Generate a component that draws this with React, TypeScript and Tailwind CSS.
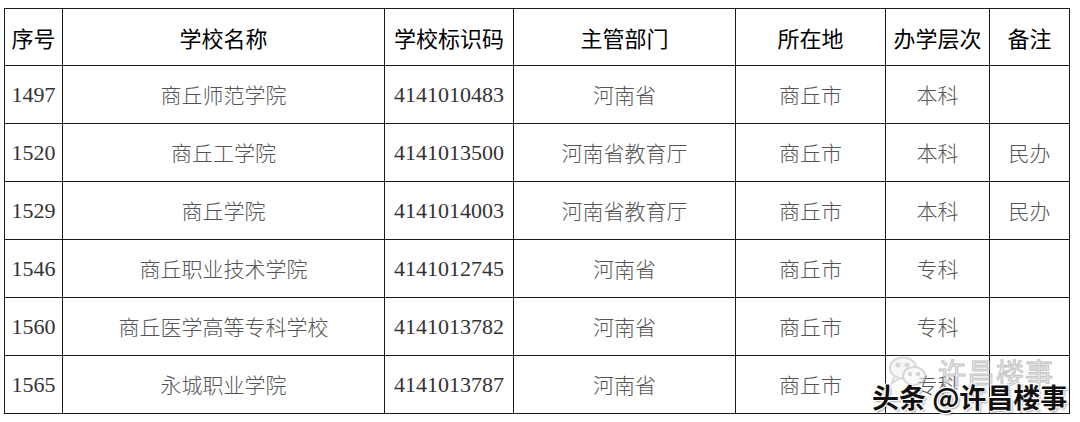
import React from "react";

type Row = {
  id: string;
  name: string;
  code: string;
  dept: string;
  city: string;
  level: string;
  note: string;
};

const rows: Row[] = [
  { id: "1497", name: "商丘师范学院", code: "4141010483", dept: "河南省", city: "商丘市", level: "本科", note: "" },
  { id: "1520", name: "商丘工学院", code: "4141013500", dept: "河南省教育厅", city: "商丘市", level: "本科", note: "民办" },
  { id: "1529", name: "商丘学院", code: "4141014003", dept: "河南省教育厅", city: "商丘市", level: "本科", note: "民办" },
  { id: "1546", name: "商丘职业技术学院", code: "4141012745", dept: "河南省", city: "商丘市", level: "专科", note: "" },
  { id: "1560", name: "商丘医学高等专科学校", code: "4141013782", dept: "河南省", city: "商丘市", level: "专科", note: "" },
  { id: "1565", name: "永城职业学院", code: "4141013787", dept: "河南省", city: "商丘市", level: "专科", note: "" },
];

const headers = ["序号", "学校名称", "学校标识码", "主管部门", "所在地", "办学层次", "备注"];
const widths = ["w-[58px]", "w-[322px]", "w-[129px]", "w-[222px]", "w-[150px]", "w-[104px]", "w-[80px]"];

const cjk = "font-['Noto_Sans_CJK_SC',sans-serif]";
const num = "font-['Liberation_Serif','Noto_Sans_CJK_SC',serif]";

function Cell({ children, className = "" }: { children?: React.ReactNode; className?: string }) {
  return (
    <td className={`border-[1.5px] border-[#1a1a1a] p-0 text-center align-middle ${className}`}>
      {children}
    </td>
  );
}

function Watermark() {
  return (
    <div className="pointer-events-none absolute left-[868px] top-[352px] h-[62px] w-[205px]">
      <div className="absolute left-[20px] top-[3px] flex items-center gap-[10px] opacity-60">
        <svg width="40" height="34" viewBox="0 0 40 34" fill="none" stroke="#bdbdbd" strokeWidth="2">
          <ellipse cx="15" cy="13" rx="13" ry="10.5" fill="#f2f2f2" />
          <ellipse cx="26" cy="21" rx="11" ry="9" fill="#f7f7f7" />
          <circle cx="10" cy="10" r="1.5" fill="#bdbdbd" />
          <circle cx="19" cy="10" r="1.5" fill="#bdbdbd" />
          <circle cx="22" cy="19" r="1.3" fill="#bdbdbd" />
          <circle cx="30" cy="19" r="1.3" fill="#bdbdbd" />
          <path d="M6 22 L4 28 L11 24" fill="#f2f2f2" />
        </svg>
        <span className={`${cjk} text-[28px] leading-none tracking-[1px] text-[#e6e6e6] [-webkit-text-stroke:1px_#9a9a9a]`}>
          许昌楼事
        </span>
      </div>
      <div
        className={`${cjk} absolute left-[4px] top-[31px] whitespace-nowrap text-[27px] font-bold leading-none text-[#111] [text-shadow:1px_1px_0_#fff,-1px_-1px_0_#fff,1px_-1px_0_#fff,-1px_1px_0_#fff,2px_2px_2px_rgba(0,0,0,0.35)]`}
      >
        头条 @许昌楼事
      </div>
    </div>
  );
}

export default function App() {
  return (
    <div className="relative h-[422px] w-[1080px] overflow-hidden bg-white pl-[4px] pt-[8px]">
      <table className="table-fixed border-collapse">
        <colgroup>
          {widths.map((w, i) => (
            <col key={i} className={w} />
          ))}
        </colgroup>
        <thead>
          <tr className="h-[57px]">
            {headers.map((h) => (
              <Cell key={h} className={`${cjk} text-[22px] font-normal text-black`}>
                {h}
              </Cell>
            ))}
          </tr>
        </thead>
        <tbody>
          {rows.map((r) => (
            <tr key={r.id} className="h-[58px]">
              <Cell className={`${num} text-[22px] text-[#333]`}>{r.id}</Cell>
              <Cell className={`${cjk} text-[21px] font-light text-[#555]`}>{r.name}</Cell>
              <Cell className={`${num} text-[22px] text-[#333]`}>{r.code}</Cell>
              <Cell className={`${cjk} text-[21px] font-light text-[#555]`}>{r.dept}</Cell>
              <Cell className={`${cjk} text-[21px] font-light text-[#555]`}>{r.city}</Cell>
              <Cell className={`${cjk} text-[21px] font-light text-[#555]`}>{r.level}</Cell>
              <Cell className={`${cjk} text-[21px] font-light text-[#555]`}>{r.note}</Cell>
            </tr>
          ))}
        </tbody>
      </table>
      <Watermark />
    </div>
  );
}
